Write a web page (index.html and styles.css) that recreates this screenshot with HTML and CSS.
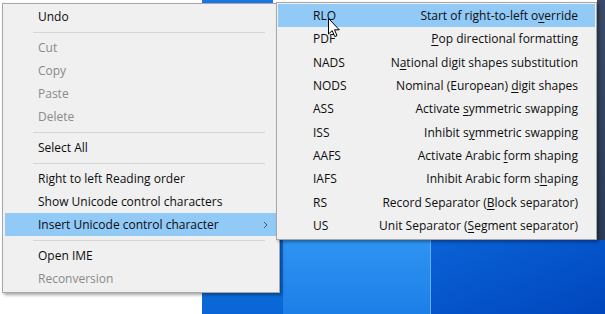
FILE: index.html
```html
<!DOCTYPE html>
<html>
<head>
<meta charset="utf-8">
<link rel="stylesheet" href="styles.css">
</head>
<body>
<div class="screen">
  <div class="menu main">
    <div class="item">Undo</div>
    <div class="sep"></div>
    <div class="item disabled">Cut</div>
    <div class="item disabled">Copy</div>
    <div class="item disabled">Paste</div>
    <div class="item disabled">Delete</div>
    <div class="sep"></div>
    <div class="item">Select All</div>
    <div class="sep"></div>
    <div class="item">Right to left Reading order</div>
    <div class="item">Show Unicode control characters</div>
    <div class="item active"><span>Insert Unicode control character</span><svg class="chev" width="5" height="8" viewBox="0 0 5 8"><polyline points="1,1 4,4 1,7" fill="none" stroke="#555" stroke-width="1"/></svg></div>
    <div class="sep"></div>
    <div class="item">Open IME</div>
    <div class="item disabled">Reconversion</div>
  </div>
  <div class="menu sub">
    <div class="row active"><span class="code">RLO</span><span class="desc">Start of right-to-left o<u>v</u>erride</span></div>
    <div class="row"><span class="code">PDF</span><span class="desc"><u>P</u>op directional formatting</span></div>
    <div class="row"><span class="code">NADS</span><span class="desc">N<u>a</u>tional digit shapes substitution</span></div>
    <div class="row"><span class="code">NODS</span><span class="desc">Nominal (European) <u>d</u>igit shapes</span></div>
    <div class="row"><span class="code">ASS</span><span class="desc">Activate <u>s</u>ymmetric swapping</span></div>
    <div class="row"><span class="code">ISS</span><span class="desc">Inhibit s<u>y</u>mmetric swapping</span></div>
    <div class="row"><span class="code">AAFS</span><span class="desc">Activate Arabic <u>f</u>orm shaping</span></div>
    <div class="row"><span class="code">IAFS</span><span class="desc">Inhibit Arabic form s<u>h</u>aping</span></div>
    <div class="row"><span class="code">RS</span><span class="desc">Record Separator (<u>B</u>lock separator)</span></div>
    <div class="row"><span class="code">US</span><span class="desc">Unit Separator (<u>S</u>egment separator)</span></div>
  </div>
  <svg class="cursor" width="13" height="20" viewBox="0 0 13 20"><path d="M0.5 0.5 L0.5 16 L4.2 12.6 L6.8 18.6 L9 17.6 L6.5 11.8 L11.3 11.8 Z" fill="#fff" stroke="#000" stroke-width="1" stroke-linejoin="round"/></svg>
</div>
</body>
</html>
```
FILE: styles.css
```css
html, body {
  margin: 0;
  padding: 0;
}
body {
  width: 605px;
  height: 314px;
  overflow: hidden;
  font-family: "Open Sans", "Noto Sans", sans-serif;
  font-size: 12px;
}
.screen {
  position: relative;
  width: 605px;
  height: 314px;
  overflow: hidden;
  background:
    linear-gradient(#ffffff, #ffffff) 0 0 / 202px 100% no-repeat,
    linear-gradient(#ffffff, #ffffff) 273px 0 / 324px 4px no-repeat,
    linear-gradient(#1a78e6, #1a78e6) 202px 0 / 71px 4px no-repeat,
    linear-gradient(#3a4a66, #2a3a58) 597px 0 / 8px 240px no-repeat,
    linear-gradient(to bottom, #2f94f2, #1c7fe8) 283px 240px / 147px 74px no-repeat,
    linear-gradient(#5fb2ff, #5fb2ff) 430px 240px / 1px 74px no-repeat,
    linear-gradient(to bottom right, #0b62d6, #0046bd) 431px 240px / 174px 74px no-repeat,
    linear-gradient(to bottom, #0c70dd, #0a66d6) 202px 240px / 81px 74px no-repeat;
}
.menu {
  position: absolute;
  box-sizing: border-box;
  background: #f0f0f0;
  border: 1px solid #a7a7a7;
  box-shadow: 2px 2px 3px rgba(0, 0, 0, 0.35);
  color: #0d0d0d;
  display: flex;
  flex-direction: column;
}
.main {
  left: 2px;
  top: 3px;
  width: 278px;
  height: 290px;
  padding: 1px 2px;
}
.item {
  height: 23px;
  line-height: 23px;
  padding-left: 33px;
  padding-right: 9px;
  display: flex;
  align-items: center;
  white-space: nowrap;
}
.item.disabled {
  color: #8a8a8a;
}
.item.active,
.row.active {
  background: #91c9f7;
}
.chev {
  margin-left: auto;
}
.sep {
  height: 1px;
  background: #d5d5d5;
  margin: 4px 12px 3px 28px;
}
.sub {
  left: 276px;
  top: 2px;
  width: 321px;
  height: 238px;
  padding: 1px 1px;
}
.row {
  height: 23.33px;
  display: flex;
  align-items: center;
  padding-left: 35px;
  padding-right: 17px;
  white-space: nowrap;
}
.code {
  width: 60px;
  flex: none;
}
.desc {
  flex: 1;
  text-align: right;
}
.desc u {
  text-decoration-thickness: 1px;
  text-underline-offset: 2px;
}
.cursor {
  position: absolute;
  left: 328px;
  top: 18px;
}
```
